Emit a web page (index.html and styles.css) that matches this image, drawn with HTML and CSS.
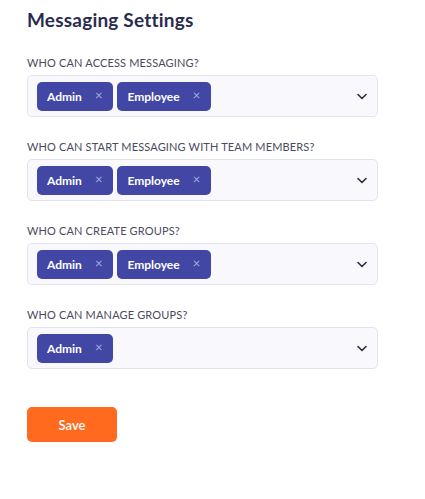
FILE: index.html
```html
<!DOCTYPE html>
<html>
<head>
<meta charset="utf-8">
<link rel="stylesheet" href="styles.css">
</head>
<body>
<div class="page">
  <h1 class="title">Messaging Settings</h1>

  <div class="field">
    <div class="label">WHO CAN ACCESS MESSAGING?</div>
    <div class="select">
      <div class="chips">
        <span class="chip">Admin<span class="x">×</span></span>
        <span class="chip">Employee<span class="x">×</span></span>
      </div>
      <svg class="chev" width="10" height="7" viewBox="0 0 10 7"><path d="M1 1.5l4 4 4-4" fill="none" stroke="#2b2d42" stroke-width="1.6" stroke-linecap="round" stroke-linejoin="round"/></svg>
    </div>
  </div>

  <div class="field">
    <div class="label">WHO CAN START MESSAGING WITH TEAM MEMBERS?</div>
    <div class="select">
      <div class="chips">
        <span class="chip">Admin<span class="x">×</span></span>
        <span class="chip">Employee<span class="x">×</span></span>
      </div>
      <svg class="chev" width="10" height="7" viewBox="0 0 10 7"><path d="M1 1.5l4 4 4-4" fill="none" stroke="#2b2d42" stroke-width="1.6" stroke-linecap="round" stroke-linejoin="round"/></svg>
    </div>
  </div>

  <div class="field">
    <div class="label">WHO CAN CREATE GROUPS?</div>
    <div class="select">
      <div class="chips">
        <span class="chip">Admin<span class="x">×</span></span>
        <span class="chip">Employee<span class="x">×</span></span>
      </div>
      <svg class="chev" width="10" height="7" viewBox="0 0 10 7"><path d="M1 1.5l4 4 4-4" fill="none" stroke="#2b2d42" stroke-width="1.6" stroke-linecap="round" stroke-linejoin="round"/></svg>
    </div>
  </div>

  <div class="field">
    <div class="label">WHO CAN MANAGE GROUPS?</div>
    <div class="select">
      <div class="chips">
        <span class="chip">Admin<span class="x">×</span></span>
      </div>
      <svg class="chev" width="10" height="7" viewBox="0 0 10 7"><path d="M1 1.5l4 4 4-4" fill="none" stroke="#2b2d42" stroke-width="1.6" stroke-linecap="round" stroke-linejoin="round"/></svg>
    </div>
  </div>

  <button class="save">Save</button>
</div>
</body>
</html>
```

FILE: styles.css
```css
html, body {
  margin: 0;
  padding: 0;
  background: #ffffff;
}
.page {
  width: 351px;
  padding: 9px 0 0 27px;
  font-family: "Lato", "Open Sans", sans-serif;
}
.title {
  margin: 0 0 25px 0;
  font-size: 19px;
  font-weight: 700;
  color: #2a2c4f;
  line-height: 22px;
  letter-spacing: 0.2px;
}
.field {
  margin-bottom: 23px;
}
.label {
  font-size: 11px;
  line-height: 13px;
  color: #4b4b5e;
  margin-bottom: 6px;
  letter-spacing: 0.15px;
}
.select {
  box-sizing: border-box;
  height: 42px;
  background: #f8f8fd;
  border: 1px solid #e4e4ee;
  border-radius: 5px;
  display: flex;
  align-items: center;
  justify-content: space-between;
  padding: 0 10px 0 9px;
}
.chips {
  display: flex;
  gap: 4px;
}
.chip {
  display: inline-flex;
  align-items: center;
  height: 29px;
  box-sizing: border-box;
  padding: 0 11px 0 10px;
  background: #4247a6;
  color: #ffffff;
  border-radius: 5px;
  font-size: 12px;
  font-weight: 700;
}
.x {
  margin-left: 13px;
  color: #a9acd8;
  font-size: 13px;
  font-weight: 400;
  position: relative;
  top: -1px;
}
.chev {
  display: block;
}
.save {
  margin-top: 15px;
  width: 90px;
  height: 35px;
  border: none;
  border-radius: 5px;
  background: #ff6a1e;
  color: #ffffff;
  font-family: "Lato", "Open Sans", sans-serif;
  font-size: 13px;
  font-weight: 600;
  cursor: pointer;
}
```
